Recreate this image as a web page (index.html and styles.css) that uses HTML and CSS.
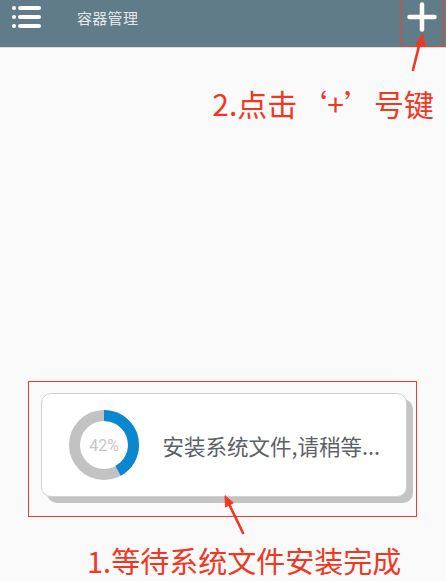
FILE: index.html
```html
<!DOCTYPE html>
<html lang="zh">
<head>
<meta charset="utf-8">
<title>容器管理</title>
<link rel="stylesheet" href="styles.css">
</head>
<body>
<div class="app">
  <header class="topbar">
    <div class="menu-btn">
      <svg width="30" height="24" viewBox="0 0 30 24">
        <g fill="#fff">
          <circle cx="2" cy="3" r="2"/>
          <circle cx="2" cy="12" r="2"/>
          <circle cx="2" cy="21" r="2"/>
          <rect x="6" y="1" width="23" height="4" rx="2"/>
          <rect x="6" y="10" width="23" height="4" rx="2"/>
          <rect x="6" y="19" width="23" height="4" rx="2"/>
        </g>
      </svg>
    </div>
    <div class="title">容器管理</div>
    <div class="plus-btn">
      <svg width="30" height="30" viewBox="0 0 30 30">
        <g stroke="#fff" stroke-width="4.5" stroke-linecap="round">
          <line x1="15" y1="2.5" x2="15" y2="27.5"/>
          <line x1="2.5" y1="15" x2="27.5" y2="15"/>
        </g>
      </svg>
    </div>
  </header>

  <main class="content">
    <div class="annot annot-top">2.点击‘+’号键</div>

    <div class="card-frame">
      <div class="card">
        <svg class="ring" width="70" height="70" viewBox="0 0 70 70">
          <circle cx="35" cy="35" r="29.5" fill="none" stroke="#c2c2c2" stroke-width="11"/>
          <circle cx="35" cy="35" r="29.5" fill="none" stroke="#0a88cf" stroke-width="11"
                  stroke-dasharray="77.85 200" transform="rotate(-90 35 35)"/>
          <text x="35" y="41" text-anchor="middle" class="ring-label">42%</text>
        </svg>
        <div class="card-text">安装系统文件,请稍等...</div>
      </div>
    </div>

    <div class="annot annot-bottom">1.等待系统文件安装完成</div>
  </main>

  <svg class="arrows" width="446" height="581" viewBox="0 0 446 581">
    <g stroke="#f2361f" stroke-width="2.6" fill="#f2361f" stroke-linecap="round">
      <line x1="413" y1="70" x2="420" y2="42"/>
      <polygon points="422.5,34 416,45 424.5,46" stroke-width="1"/>
      <line x1="243" y1="533" x2="229" y2="504"/>
      <polygon points="225,496 225.5,507 233,503" stroke-width="1"/>
    </g>
  </svg>
</div>
</body>
</html>
```

FILE: styles.css
```css
* {
  box-sizing: border-box;
}

html, body {
  margin: 0;
  padding: 0;
  background: #fafafa;
}

body {
  font-family: "Noto Sans CJK SC", "Noto Sans", "Liberation Sans", sans-serif;
}

.app {
  position: relative;
  width: 446px;
  height: 581px;
  overflow: hidden;
}

.topbar {
  height: 48px;
  background: #607c89;
  border-bottom: 1px solid #d9dde0;
  display: flex;
  align-items: flex-start;
}

.menu-btn {
  margin-left: 12px;
  margin-top: 5px;
  width: 30px;
  height: 24px;
}

.menu-btn svg {
  display: block;
}

.title {
  margin-left: 35px;
  margin-top: 7px;
  font-size: 15px;
  line-height: 22px;
  color: #e3e8eb;
  letter-spacing: 0.3px;
}

.plus-btn {
  margin-left: auto;
  margin-right: 3px;
  width: 42px;
  height: 47px;
  border: 1.5px solid #e8412c;
  border-top: none;
  display: flex;
  justify-content: center;
  padding-top: 2px;
}

.plus-btn svg {
  display: block;
}

.content {
  display: flex;
  flex-direction: column;
}

.annot {
  color: #f2361f;
  font-size: 30px;
  line-height: 40px;
  font-weight: 400;
  white-space: nowrap;
}

.annot-top {
  margin-top: 35px;
  align-self: flex-end;
  margin-right: 12px;
}

.card-frame {
  margin-top: 258px;
  margin-left: 28px;
  width: 389px;
  height: 136px;
  border: 1.5px solid #ef3f2a;
  padding: 10.5px 0 0 11.5px;
}

.card {
  width: 366px;
  height: 104px;
  background: #fff;
  border: 1px solid #d2d2d2;
  border-radius: 10px;
  box-shadow: 6px 6px 0 #c4c4c4;
  display: flex;
  align-items: center;
  padding-left: 27px;
}

.ring {
  display: block;
  flex: none;
}

.ring-label {
  font-family: "Roboto", "Liberation Sans", sans-serif;
  font-size: 16px;
  fill: #c6c6c6;
}

.card-text {
  margin-left: 24px;
  margin-top: 2px;
  font-size: 21.5px;
  color: #5b6166;
  white-space: nowrap;
}

.annot-bottom {
  margin-top: 23px;
  margin-left: 87px;
  font-size: 29px;
}

.arrows {
  position: absolute;
  left: 0;
  top: 0;
  pointer-events: none;
}
```
